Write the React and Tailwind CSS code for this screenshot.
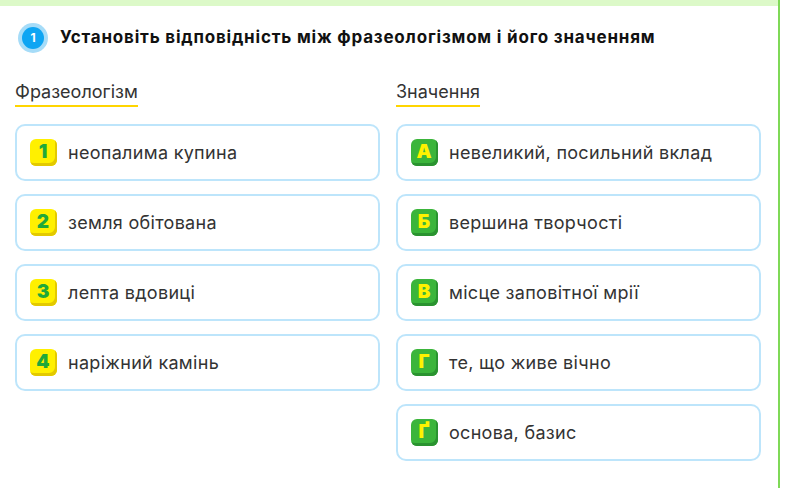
import React from "react";

const left = [
  { key: "1", text: "неопалима купина" },
  { key: "2", text: "земля обітована" },
  { key: "3", text: "лепта вдовиці" },
  { key: "4", text: "наріжний камінь" },
];

const right = [
  { key: "А", text: "невеликий, посильний вклад" },
  { key: "Б", text: "вершина творчості" },
  { key: "В", text: "місце заповітної мрії" },
  { key: "Г", text: "те, що живе вічно" },
  { key: "Ґ", text: "основа, базис" },
];

function Badge({ children, tone }) {
  const yellow = tone === "yellow";
  return (
    <span
      className={
        "flex h-[27px] w-[27px] shrink-0 items-center justify-center rounded-[6px] pb-[2px] pr-[1px] text-[19px] font-black leading-none " +
        (yellow
          ? "bg-[#fff000] text-[#1fa83a] shadow-[inset_-2px_-3px_0_#e3c900]"
          : "bg-[#3bb53b] text-[#fff200] shadow-[inset_-2px_-3px_0_#2a9330]")
      }
    >
      {children}
    </span>
  );
}

function Card({ item, tone }) {
  return (
    <div className="flex h-[57px] items-center gap-[11px] rounded-[10px] border-2 border-[#bde5fb] bg-white pl-[13px]">
      <Badge tone={tone}>{item.key}</Badge>
      <span className="text-[18px] tracking-[0.3px] text-[#333]">{item.text}</span>
    </div>
  );
}

function Heading({ children }) {
  return (
    <div className="mb-[17px] flex h-[26px]">
      <span className="border-b-2 border-[#ffd500] text-[18px] leading-[22px] text-[#333]">{children}</span>
    </div>
  );
}

export default function App() {
  return (
    <div className="flex h-[488px] w-[795px] bg-white font-['Inter',sans-serif]">
      <div className="flex w-[778px] flex-col">
        <div className="h-[6px] bg-[#dcf9c8]" />
        <div className="flex h-[62px] items-center gap-[12px] pl-[18px] pt-[1px]">
          <span className="flex h-[30px] w-[30px] items-center justify-center rounded-full bg-[#a6dcf8]">
            <span className="flex h-[22px] w-[22px] items-center justify-center rounded-full bg-[#0ea5f3] text-[12px] font-bold text-white">
              1
            </span>
          </span>
          <h1 className="text-[17px] font-bold tracking-[0.8px] text-[#111]">
            Установіть відповідність між фразеологізмом і його значенням
          </h1>
        </div>
        <div className="mt-[13px] grid grid-cols-[365px_365px] gap-x-[16px] pl-[15px]">
          <div className="flex flex-col">
            <Heading>Фразеологізм</Heading>
            <div className="flex flex-col gap-[13px]">
              {left.map((it) => (
                <Card key={it.key} item={it} tone="yellow" />
              ))}
            </div>
          </div>
          <div className="flex flex-col">
            <Heading>Значення</Heading>
            <div className="flex flex-col gap-[13px]">
              {right.map((it) => (
                <Card key={it.key} item={it} tone="green" />
              ))}
            </div>
          </div>
        </div>
      </div>
      <div className="w-[2px] bg-[#7fd957]" />
    </div>
  );
}
